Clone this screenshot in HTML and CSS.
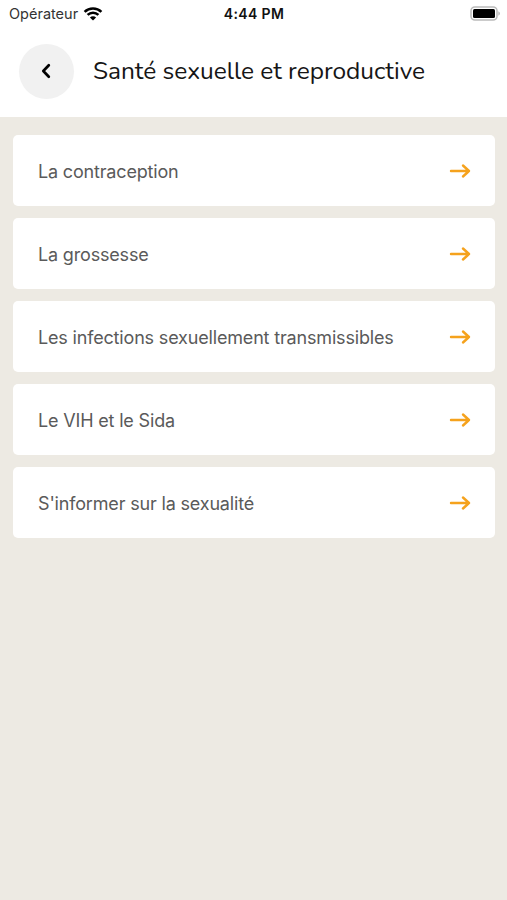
FILE: index.html
```
<!DOCTYPE html>
<html lang="fr">
<head>
  <meta charset="UTF-8">
  <meta name="viewport" content="width=device-width, initial-scale=1.0">
  <title>Santé sexuelle et reproductive</title>
  <link rel="stylesheet" href="styles.css">
</head>
<body>
  <svg class="defs" width="0" height="0">
    <symbol id="arrow" viewBox="0 0 22 16">
      <path d="M2 8H20M14 2.5L20 8L14 13.5" />
    </symbol>
  </svg>
  <header>
    <div class="statusBar">
      <div class="carrier">
        <span class="carrierName">Opérateur</span>
        <svg class="wifi" width="20" height="14" viewBox="0 0 20 14">
          <path d="M1.6 4.9A12.2 12.2 0 0 1 18.4 4.9M4.6 7.9A7.8 7.8 0 0 1 15.4 7.9" />
          <path class="dot" d="M10 13.6L6.9 10.5A4.4 4.4 0 0 1 13.1 10.5Z" />
        </svg>
      </div>
      <span class="time">4:44 PM</span>
      <svg class="battery" width="30" height="15" viewBox="0 0 30 15">
        <rect class="shell" x="1" y="1" width="26" height="13" rx="3.8" />
        <rect x="3" y="3" width="22" height="9" rx="1.5" />
        <path class="cap" d="M28.3 5.2Q30 6 30 7.5T28.3 9.8Z" />
      </svg>
    </div>
    <div class="titleBar">
      <button class="back" aria-label="Retour">
        <svg width="10" height="16" viewBox="0 0 10 16">
          <path d="M7.8 2.3L2.3 8L7.8 13.7" />
        </svg>
      </button>
      <h1>Santé sexuelle et reproductive</h1>
    </div>
  </header>
  <main class="topics">
    <a class="topic"><span>La contraception</span><svg class="arrow"><use href="#arrow" /></svg></a>
    <a class="topic"><span>La grossesse</span><svg class="arrow"><use href="#arrow" /></svg></a>
    <a class="topic"><span>Les infections sexuellement transmissibles</span><svg class="arrow"><use href="#arrow" /></svg></a>
    <a class="topic"><span>Le VIH et le Sida</span><svg class="arrow"><use href="#arrow" /></svg></a>
    <a class="topic"><span>S'informer sur la sexualité</span><svg class="arrow"><use href="#arrow" /></svg></a>
  </main>
</body>
</html>
```
FILE: styles.css
```
* {
  box-sizing: border-box;
}
body {
  margin: 0;
  min-height: 100vh;
  background: #edeae3;
  font-family: Inter, "Liberation Sans", sans-serif;
}
.defs {
  display: none;
}
header {
  height: 117px;
  background: #fff;
}
.statusBar {
  display: grid;
  grid-template-columns: 1fr auto 1fr;
  align-items: center;
  height: 27px;
  padding: 0 7px 0 9px;
  color: #111;
}
.carrier {
  display: flex;
  align-items: center;
  gap: 5px;
}
.carrierName {
  font-size: 14.5px;
  color: #333;
}
.wifi {
  fill: none;
  stroke: #000;
  stroke-width: 2.6;
}
.wifi .dot {
  fill: #000;
  stroke: none;
}
.time {
  padding-right: 1px;
  font-size: 14px;
  font-weight: 600;
  letter-spacing: 0.35px;
}
.battery {
  justify-self: end;
}
.battery .shell {
  fill: #fff;
  stroke: #bbb;
  stroke-width: 1.5;
}
.battery .cap {
  fill: #bbb;
}
.titleBar {
  display: flex;
  align-items: center;
  height: 88px;
  padding-left: 19px;
  gap: 19px;
}
.back {
  display: flex;
  align-items: center;
  justify-content: center;
  width: 55px;
  height: 55px;
  padding: 0 2px 0 0;
  border: none;
  border-radius: 50%;
  background: #f1f1f1;
}
.back svg {
  fill: none;
  stroke: #000;
  stroke-width: 2.7;
  stroke-linecap: round;
  stroke-linejoin: round;
}
h1 {
  margin: 0;
  font-family: Nunito, Lato, sans-serif;
  font-size: 24.5px;
  font-weight: 400;
  letter-spacing: -0.04px;
  color: #161616;
  white-space: nowrap;
}
.topics {
  display: flex;
  flex-direction: column;
  gap: 12px;
  padding: 18px 12px 0 13px;
}
.topic {
  display: flex;
  align-items: center;
  justify-content: space-between;
  height: 71px;
  padding: 0 24px 0 25px;
  border-radius: 5px;
  background: #fff;
  font-size: 18px;
  letter-spacing: -0.17px;
  color: #5a5a5a;
}
.topic span {
  padding-top: 1px;
}
.arrow {
  width: 22px;
  height: 16px;
  fill: none;
  stroke: #f5a21d;
  stroke-width: 2.4;
  stroke-linecap: round;
  stroke-linejoin: round;
}
```
